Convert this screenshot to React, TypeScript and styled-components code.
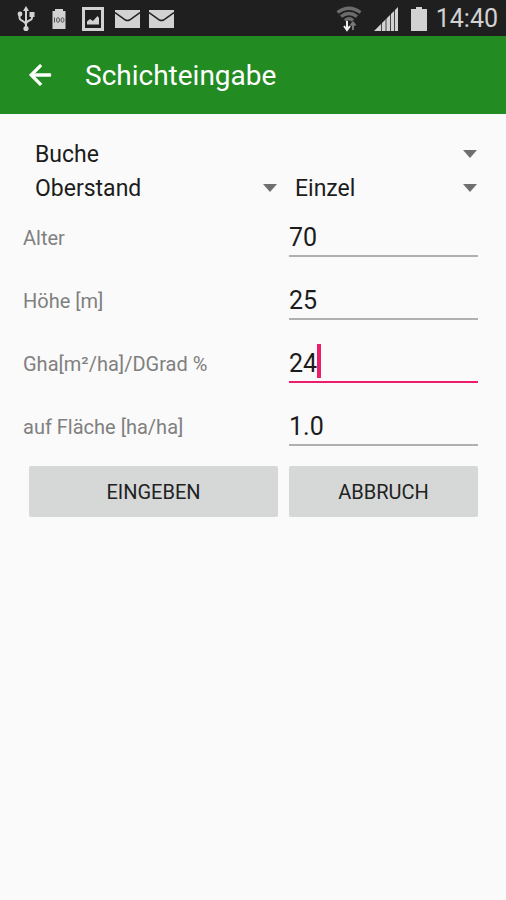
import React from "react";
import styled, { createGlobalStyle } from "styled-components";

const GlobalStyle = createGlobalStyle`
  * { box-sizing: border-box; }
  body {
    margin: 0;
    background: #fafafa;
    color: #1c1c1c;
    font-family: Roboto, "Liberation Sans", sans-serif;
  }
`;

const StatusBar = styled.div`
  display: flex;
  align-items: center;
  justify-content: space-between;
  height: 36px;
  padding: 2px 8px 0 16px;
  background: #1f1f1f;
  color: #d2d2d2;
`;

const StatusGroup = styled.div<{ $gap: number }>`
  display: flex;
  align-items: center;
  gap: ${(p) => p.$gap}px;

  svg { display: block; }
`;

const Clock = styled.time`
  font-size: 25px;
  line-height: 34px;
`;

const AppBar = styled.header`
  display: flex;
  align-items: center;
  gap: 29px;
  height: 78px;
  padding: 0 24px;
  background: #228b22;
  color: #fff;
`;

const BackButton = styled.button`
  display: flex;
  padding: 0;
  border: 0;
  background: none;
  color: inherit;
`;

const Title = styled.h1`
  margin: 0;
  font-size: 28px;
  font-weight: 400;
  line-height: 36px;
  padding-top: 2px;
`;

const Form = styled.form`
  padding: 24px 23px;
`;

const Row = styled.div<{ $single?: boolean }>`
  display: grid;
  grid-template-columns: ${(p) => (p.$single ? "1fr" : "13fr 10fr")};
`;

const SpinnerBox = styled.div`
  display: grid;
  grid-template-columns: 1fr 14px;
  align-items: center;
  height: 34px;
  padding: 0 6px 0 12px;
`;

const Select = styled.select`
  grid-area: 1 / 1 / 2 / 3;
  width: 100%;
  padding: 0;
  border: 0;
  outline: 0;
  appearance: none;
  background: none;
  color: inherit;
  font: 23px/34px Roboto, "Liberation Sans", sans-serif;
`;

const Arrow = styled.svg`
  grid-area: 1 / 2;
  margin-bottom: 2px;
  pointer-events: none;
`;

const Label = styled.label`
  height: 63px;
  color: #808080;
  font-size: 20px;
  line-height: 64px;
`;

const Field = styled.div<{ $active?: boolean }>`
  position: relative;
  height: 47px;
  margin: 4px 5px 12px 6px;
  border-bottom: 2px solid ${(p) => (p.$active ? "#ee1c6c" : "#b0b0b0")};
  font-size: 25px;
`;

const Input = styled.input`
  display: block;
  width: 100%;
  height: 45px;
  padding: 10px 0 0;
  border: 0;
  outline: 0;
  background: none;
  color: inherit;
  caret-color: #ee1c6c;
  font: 25px/32px Roboto, "Liberation Sans", sans-serif;
`;

const Caret = styled.span`
  position: absolute;
  left: 2ch;
  bottom: 3px;
  width: 4px;
  height: 34px;
  background: #ee1c6c;
`;

const Actions = styled(Row)`
  padding-top: 8px;
`;

const Button = styled.button`
  height: 51px;
  margin: 0 5px 0 6px;
  padding: 0;
  border: 0;
  border-radius: 2px;
  background: #d6d8d7;
  color: #222;
  font: 20px/50px Roboto, "Liberation Sans", sans-serif;
  text-transform: uppercase;
`;

const UsbIcon = () => (
  <svg width="20" height="26" viewBox="0 0 20 26" fill="none" stroke="currentColor" strokeWidth="2" aria-hidden="true">
    <path d="M10 4v18M3.500 9v3c0 3 6.500 3 6.500 7M16 9v3c0 3-6 2-6 6" />
    <path d="M10 0l3 5H7z" fill="currentColor" stroke="none" />
    <circle cx="4" cy="8" r="2.4" fill="currentColor" stroke="none" />
    <path d="M13.5 6h5v5h-5z" fill="currentColor" stroke="none" />
    <circle cx="10" cy="22.5" r="2.6" fill="currentColor" stroke="none" />
  </svg>
);

const FullBatteryIcon = () => (
  <svg width="16" height="20" viewBox="0 0 16 20" aria-hidden="true">
    <path d="M4 0h8v2h2.5v18h-13V2H4z" fill="currentColor" />
    <g fill="none" stroke="#555" strokeWidth="1">
      <path d="M3.500 8.500v5" />
      <ellipse cx="7" cy="11" rx="1.500" ry="2.300" />
      <ellipse cx="11.500" cy="11" rx="1.500" ry="2.300" />
    </g>
  </svg>
);

const PictureIcon = () => (
  <svg width="22" height="24" viewBox="0 0 22 24" aria-hidden="true">
    <path d="M1.500 1.500h19v21h-19z" fill="none" stroke="currentColor" strokeWidth="3" />
    <path d="M5 17.500v-3l3-2.500 3 2 4.500-5 1.500 2v6.500z" fill="currentColor" />
  </svg>
);

const MailIcon = () => (
  <svg width="25" height="20" viewBox="0 0 25 20" aria-hidden="true">
    <path d="M0 1h25v18H0z" fill="currentColor" />
    <path d="M0 3.500L10.500 11q2 1.200 4 0L25 3.500" fill="none" stroke="#1f1f1f" strokeWidth="1.500" />
  </svg>
);

const WifiIcon = () => (
  <svg width="26" height="26" viewBox="0 0 26 26" fill="none" aria-hidden="true">
    <g stroke="#6c6c6c" strokeWidth="3.400">
      <path d="M1.500 6.500q11.500-8.500 23 0" />
      <path d="M5 10.500q8-6 16 0" />
      <path d="M9 14.500q4-3.500 8 0" />
    </g>
    <path d="M11 15v8M8 20l3 4 3-4" stroke="#eee" strokeWidth="2" />
    <path d="M17 24v-7M14.500 19.500l2.500-3 2.500 3" stroke="#777" strokeWidth="2" />
  </svg>
);

const SignalIcon = () => (
  <svg width="25" height="24" viewBox="0 0 25 24" aria-hidden="true">
    <path d="M0 24L24 0v24z" fill="currentColor" />
    <path d="M7.500 12v12M12 8v16M16.500 4v20M20.500 1v23" stroke="#1f1f1f" strokeWidth="0.800" />
  </svg>
);

const BatteryIcon = () => (
  <svg width="16" height="24" viewBox="0 0 16 24" aria-hidden="true">
    <path d="M5 0h6v2h5v22H0V2h5z" fill="currentColor" />
  </svg>
);

const BackIcon = () => (
  <svg width="32" height="32" viewBox="0 0 24 24" fill="currentColor" stroke="currentColor" strokeWidth="0.600" aria-hidden="true">
    <path d="M20 11H7.830l5.590-5.590L12 4l-8 8 8 8 1.410-1.410L7.830 13H20v-2z" />
  </svg>
);

const Spinner = ({ label, value }: { label: string; value: string }) => (
  <SpinnerBox>
    <Select aria-label={label} defaultValue={value}>
      <option>{value}</option>
    </Select>
    <Arrow width="14" height="8" viewBox="0 0 14 8" aria-hidden="true">
      <path d="M0 0h14L7 8z" fill="#6f6f6f" />
    </Arrow>
  </SpinnerBox>
);

const fields = [
  { id: "alter", label: "Alter", value: "70" },
  { id: "hoehe", label: "Höhe [m]", value: "25" },
  { id: "gha", label: "Gha[m²/ha]/DGrad %", value: "24", active: true },
  { id: "flaeche", label: "auf Fläche [ha/ha]", value: "1.0" },
];

export default function App() {
  return (
    <>
      <GlobalStyle />
      <StatusBar>
        <StatusGroup $gap={11}>
          <StatusGroup $gap={15}>
            <UsbIcon />
            <FullBatteryIcon />
            <PictureIcon />
          </StatusGroup>
          <StatusGroup $gap={9}>
            <MailIcon />
            <MailIcon />
          </StatusGroup>
        </StatusGroup>
        <StatusGroup $gap={9}>
          <StatusGroup $gap={12}>
            <WifiIcon />
            <SignalIcon />
            <BatteryIcon />
          </StatusGroup>
          <Clock>14:40</Clock>
        </StatusGroup>
      </StatusBar>
      <AppBar>
        <BackButton type="button" aria-label="Zurück">
          <BackIcon />
        </BackButton>
        <Title>Schichteingabe</Title>
      </AppBar>
      <Form onSubmit={(e) => e.preventDefault()}>
        <Row $single>
          <Spinner label="Baumart" value="Buche" />
        </Row>
        <Row>
          <Spinner label="Schicht" value="Oberstand" />
          <Spinner label="Mischungsform" value="Einzel" />
        </Row>
        {fields.map((f) => (
          <Row key={f.id}>
            <Label htmlFor={f.id}>{f.label}</Label>
            <Field $active={f.active}>
              <Input id={f.id} inputMode="decimal" defaultValue={f.value} />
              {f.active && <Caret />}
            </Field>
          </Row>
        ))}
        <Actions>
          <Button type="submit">Eingeben</Button>
          <Button type="button">Abbruch</Button>
        </Actions>
      </Form>
    </>
  );
}
